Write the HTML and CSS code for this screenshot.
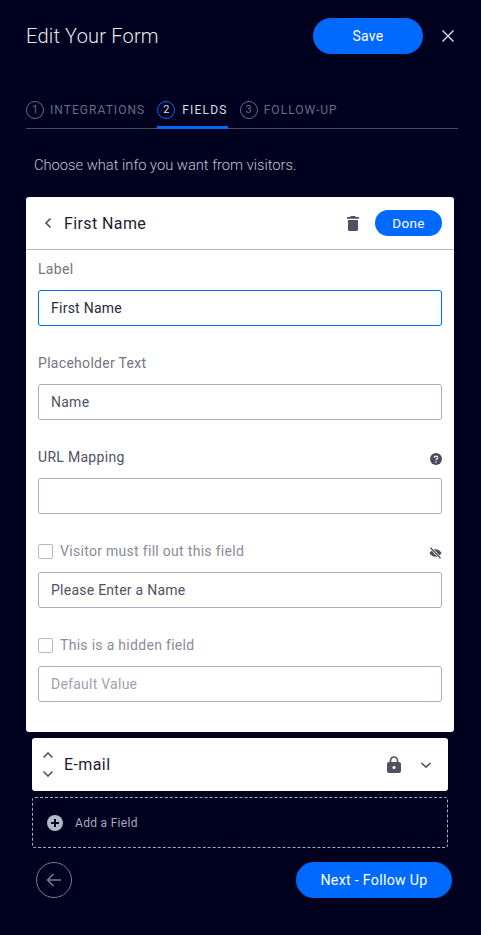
FILE: index.html
```html
<!DOCTYPE html>
<html lang="en">
<head>
  <meta charset="UTF-8" />
  <meta name="viewport" content="width=device-width, initial-scale=1.0" />
  <title>Edit Your Form</title>
  <link rel="stylesheet" href="styles.css">
</head>
<body>
  <header class="top-bar">
    <h1>Edit Your Form</h1>
    <button class="btn save-btn">Save</button>
    <svg class="close-icon" width="14" height="14" viewBox="0 0 14 14"><path d="M1.500 1.500l11 11M12.500 1.500l-11 11" stroke="#c9cbd6" stroke-width="1.600" fill="none"/></svg>
  </header>

  <nav class="steps">
    <div class="step"><span class="step-num">1</span>INTEGRATIONS</div>
    <div class="step active"><span class="step-num">2</span>FIELDS</div>
    <div class="step"><span class="step-num">3</span>FOLLOW-UP</div>
  </nav>

  <p class="intro">Choose what info you want from visitors.</p>

  <section class="card">
    <div class="card-head">
      <svg class="back-icon" width="8" height="12" viewBox="0 0 8 12"><path d="M6.500 1.500L2 6l4.500 4.500" stroke="#4f5261" stroke-width="1.700" fill="none"/></svg>
      <span class="card-title">First Name</span>
      <svg class="trash-icon" width="12" height="15" viewBox="0 0 12 15"><path d="M4 0h4l1 1h3v1.800H0V1h3zM1 4h10v9.500A1.500 1.500 0 0 1 9.500 15h-7A1.500 1.500 0 0 1 1 13.500z" fill="#4f5261"/></svg>
      <button class="btn done-btn">Done</button>
    </div>

    <div class="card-body">
      <div class="field">
        <div class="field-label">Label</div>
        <div class="input focus">First Name</div>
      </div>
      <div class="field">
        <div class="field-label">Placeholder Text</div>
        <div class="input muted">Name</div>
      </div>
      <div class="field">
        <div class="field-label dark">URL Mapping
          <svg class="side-icon" width="12" height="12" viewBox="0 0 12 12"><circle cx="6" cy="6" r="6" fill="#4a4c5a"/><path d="M4.300 4.700C4.300 3.700 5 3.100 6 3.100s1.700.6 1.700 1.500c0 1.300-1.700 1.300-1.700 2.500" stroke="#fff" stroke-width="1.200" fill="none"/><circle cx="6" cy="9" r=".8" fill="#fff"/></svg>
        </div>
        <div class="input"></div>
      </div>
      <div class="field">
        <div class="check-row">
          <span class="checkbox"></span>Visitor must fill out this field
          <svg class="side-icon" width="13" height="12" viewBox="0 0 13 12"><path d="M.5 6C2 3.500 4 2.200 6.500 2.200S11 3.500 12.500 6C11 8.500 9 9.800 6.500 9.800S2 8.500.5 6z" fill="#4a4c5a"/><circle cx="6.500" cy="6" r="1.600" fill="#fff"/><path d="M1.500 .8l10 10.400" stroke="#fff" stroke-width="2.400"/><path d="M1.500 .8l10 10.400" stroke="#4a4c5a" stroke-width="1.300"/></svg>
        </div>
        <div class="input muted">Please Enter a Name</div>
      </div>
      <div class="field">
        <div class="check-row">
          <span class="checkbox"></span>This is a hidden field
        </div>
        <div class="input placeholder">Default Value</div>
      </div>
    </div>
  </section>

  <section class="collapsed-row">
    <div class="sort-arrows">
      <svg width="12" height="8" viewBox="0 0 12 8"><path d="M1.500 5.500L6 1l4.500 4.500" stroke="#4f5261" stroke-width="1.600" fill="none"/></svg>
      <svg width="12" height="8" viewBox="0 0 12 8"><path d="M1.500 2.500L6 7l4.500-4.500" stroke="#4f5261" stroke-width="1.600" fill="none"/></svg>
    </div>
    <span class="card-title">E-mail</span>
    <svg class="lock-icon" width="14" height="17" viewBox="0 0 14 17"><path d="M3.500 7V4.500a3.500 3.500 0 0 1 7 0V7" stroke="#4f5261" stroke-width="1.700" fill="none"/><rect y="6" width="14" height="11" rx="2" fill="#4f5261"/><circle cx="7" cy="11.500" r="1.500" fill="#fff"/></svg>
    <svg width="12" height="8" viewBox="0 0 12 8"><path d="M1.500 2L6 6.200 10.500 2" stroke="#4f5261" stroke-width="1.600" fill="none"/></svg>
  </section>

  <div class="add-field">
    <svg width="16" height="16" viewBox="0 0 16 16"><circle cx="8" cy="8" r="8" fill="#b4b8cc"/><path d="M8 4v8M4 8h8" stroke="#00001f" stroke-width="2"/></svg>
    <span>Add a Field</span>
  </div>

  <footer class="bottom-bar">
    <button class="round-back">
      <svg width="16" height="14" viewBox="0 0 16 14"><path d="M7.500 1L1.500 7l6 6M1.500 7H15" stroke="#7b7d8c" stroke-width="1.500" fill="none"/></svg>
    </button>
    <button class="btn next-btn">Next - Follow Up</button>
  </footer>
</body>
</html>
```

FILE: styles.css
```css
* {
  box-sizing: border-box;
}

body {
  margin: 0;
  height: 935px;
  overflow: hidden;
  padding: 18px 23px 0 26px;
  background-color: #00001f;
  font-family: 'Roboto', sans-serif;
  color: #ffffff;
}

.btn {
  border: none;
  background-color: #0069ff;
  color: white;
  font-family: inherit;
  border-radius: 2rem;
  padding: 0;
}

.top-bar {
  display: flex;
  align-items: center;
  height: 36px;
}

.top-bar h1 {
  flex: 1;
  margin: 0;
  font-size: 20px;
  font-weight: 300;
  letter-spacing: 0.2px;
  color: #e9e9ee;
}

.save-btn {
  width: 110px;
  height: 36px;
  font-size: 14px;
  letter-spacing: 0.3px;
}

.close-icon {
  margin: 0 3px 0 18px;
}

.steps {
  display: flex;
  gap: 12px;
  margin-top: 47px;
  height: 28px;
  border-bottom: 1px solid #4a4b60;
}

.step {
  display: flex;
  align-items: flex-start;
  gap: 6px;
  height: 28px;
  font-size: 12px;
  line-height: 18px;
  letter-spacing: 1.050px;
  color: #6c6d80;
}

.step.active {
  gap: 7px;
  letter-spacing: 1.200px;
  color: #dcdde6;
  border-bottom: 3px solid #0069ff;
}

.step-num {
  width: 18px;
  height: 18px;
  border: 1px solid #6c6d80;
  border-radius: 50%;
  text-align: center;
  font-size: 11px;
  line-height: 16px;
  letter-spacing: 0;
}

.active .step-num {
  border-color: #0069ff;
}

.intro {
  margin: 26px 0 22px 8px;
  font-size: 14.700px;
  line-height: 20px;
  font-weight: 300;
  color: #c4c4d0;
}

.card {
  width: 428px;
  height: 535px;
  background: white;
  border-radius: 3px;
  color: #1c1c33;
}

.card-head {
  display: flex;
  align-items: center;
  height: 53px;
  padding: 0 12px 0 18px;
  border-bottom: 1px solid #b4b8c4;
}

.card-title {
  flex: 1;
  margin-left: 12px;
  font-size: 16px;
  letter-spacing: 0.4px;
}

.trash-icon {
  margin-right: 16px;
}

.done-btn {
  width: 67px;
  height: 26px;
  font-size: 13.500px;
  letter-spacing: 0.3px;
}

.card-body {
  padding: 10px 12px 0;
}

.field {
  margin-bottom: 28px;
}

.field-label,
.check-row {
  display: flex;
  align-items: center;
  height: 18px;
  margin-bottom: 12px;
  font-size: 14px;
  letter-spacing: 0.3px;
}

.field-label {
  justify-content: space-between;
  color: #72747f;
}

.field-label.dark {
  color: #4f5261;
}

.check-row {
  color: #8a8c98;
}

.side-icon {
  margin-top: 4px;
}

.check-row .side-icon {
  margin-left: auto;
}

.input {
  height: 36px;
  padding: 0 12px;
  border: 1px solid #a8adc0;
  border-radius: 3px;
  font-size: 14px;
  letter-spacing: 0.25px;
  line-height: 34px;
}

.input.focus {
  border-color: #0069ff;
  color: #2a2a40;
}

.input.muted {
  color: #4f5261;
}

.input.placeholder {
  color: #a0a2ac;
}

.checkbox {
  width: 15px;
  height: 15px;
  margin-right: 7px;
  border: 1.500px solid #b4b8cc;
  border-radius: 2px;
}

.collapsed-row {
  display: flex;
  align-items: center;
  width: 416px;
  height: 53px;
  margin: 6px 0 0 6px;
  padding: 0 16px 0 10px;
  background: white;
  border-radius: 3px;
  color: #1c1c33;
}

.sort-arrows {
  display: flex;
  flex-direction: column;
  gap: 9px;
  line-height: 0;
}

.collapsed-row .card-title {
  margin-left: 10px;
}

.lock-icon {
  margin-right: 19px;
}

.add-field {
  display: flex;
  align-items: center;
  gap: 12px;
  width: 416px;
  height: 51px;
  margin: 6px 0 0 6px;
  padding-left: 14px;
  border: 1px dashed #a8abbd;
  border-radius: 3px;
  font-size: 12px;
  letter-spacing: 0.3px;
  color: #a8abbd;
}

.bottom-bar {
  display: flex;
  justify-content: space-between;
  align-items: center;
  margin-top: 14px;
  padding: 0 6px 0 10px;
}

.round-back {
  display: flex;
  align-items: center;
  justify-content: center;
  width: 36px;
  height: 36px;
  padding: 0;
  background: none;
  border: 1px solid #7b7d8c;
  border-radius: 50%;
}

.next-btn {
  width: 156px;
  height: 36px;
  font-size: 14.200px;
  letter-spacing: 0.3px;
}
```
